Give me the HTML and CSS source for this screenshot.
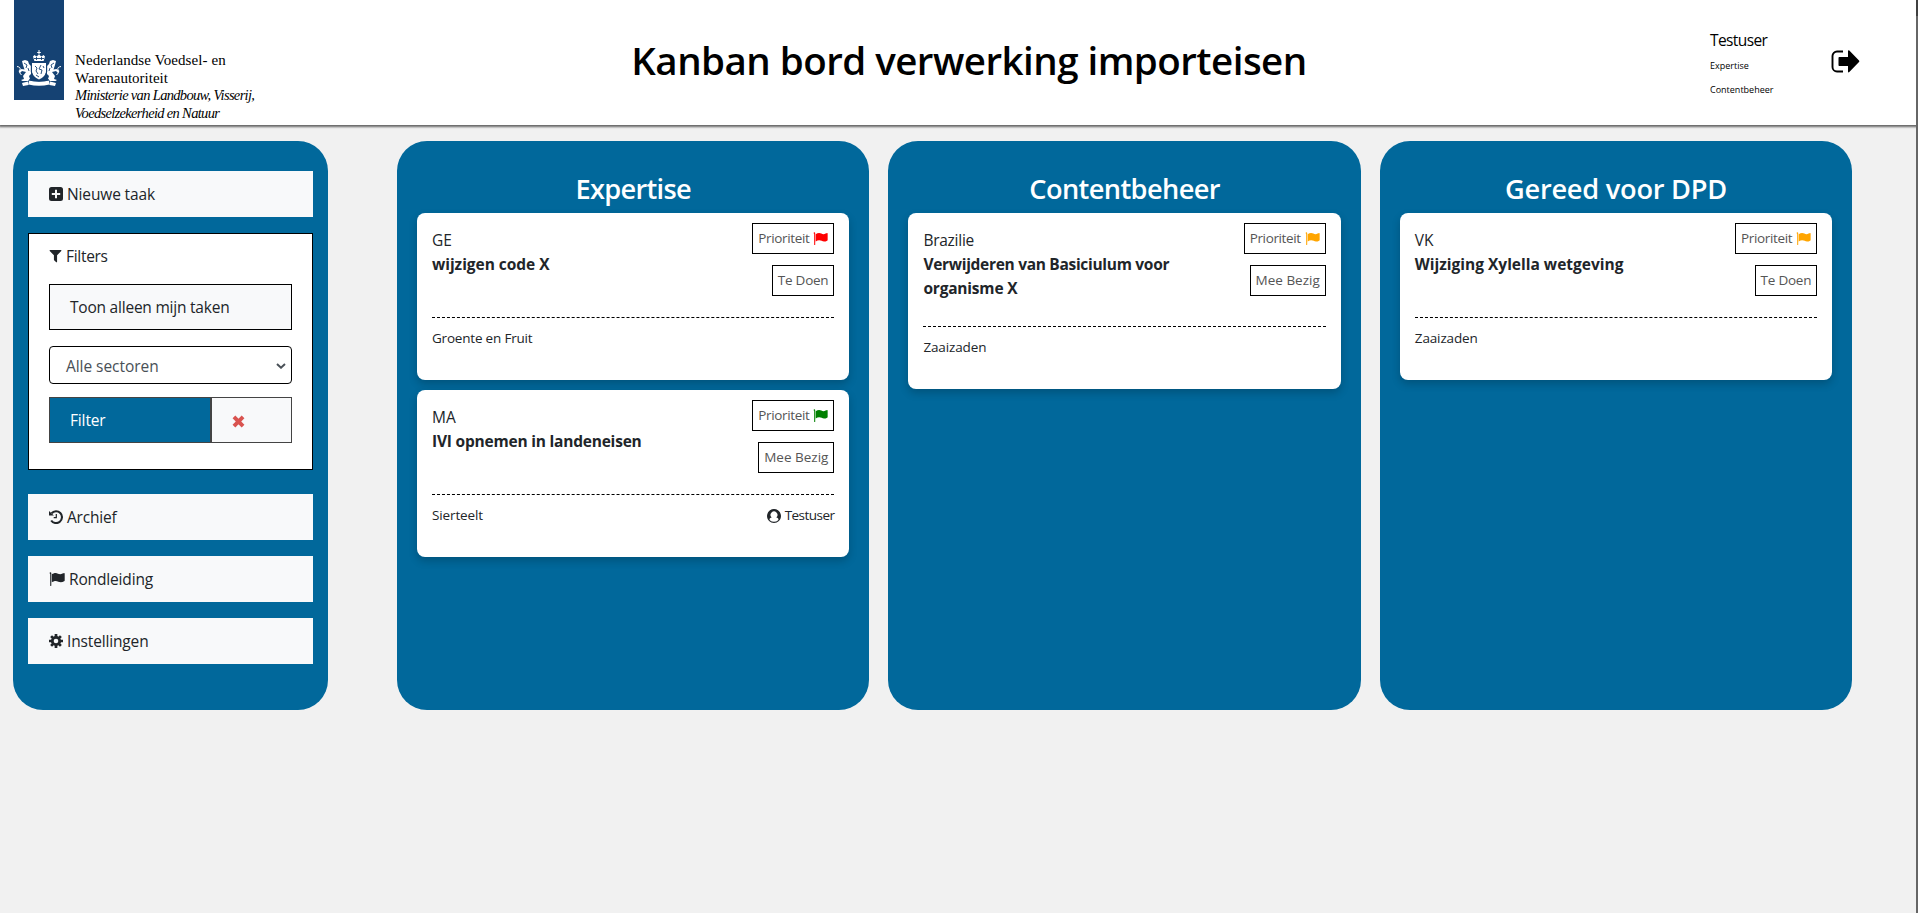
FILE: index.html
```html
<!DOCTYPE html>
<html lang="nl">
<head>
<meta charset="utf-8">
<title>Kanban bord verwerking importeisen</title>
<link rel="stylesheet" href="styles.css">
</head>
<body>
<svg class="sprite" aria-hidden="true">
  <symbol id="flag" viewBox="0 0 16 14"><path d="M1.4.2c.6 0 .9.4.9.8v12.6c0 .2-.1.3-.3.3H1.500c-.2 0-.3-.1-.3-.3V2C.8 1.800.600 1.500.600 1.100.600.600.900.200 1.400.2z"/><path d="M2.800 2.300C4 1.600 5.300 1 6.500 1c2 0 3 1.300 4.700 1.300 1.500 0 3.300-1.200 3.900-1.200.4 0 .6.200.6.600v6.900c0 .4-.3.500-.6.700-1 .500-2.200 1-3.300 1-1.900 0-3.100-1.300-5.200-1.300-1.200 0-2.500.6-3.800 1.300z"/></symbol>
</svg>
<header class="header">
  <div class="brand">
    <div class="ribbon">
      <svg class="crest" viewBox="0 0 44 37">
        <g>
          <path d="M21.500 0h1v2h1.300v1h-1.300v1.400h-1V3h-1.300V2h1.300z"/>
          <path d="M16 6.500l1.500-1.500 2 1.600L22 4.500l2.500 2.100 2-1.600L28 6.500l-1.400 4.500h-9.200z"/>
          <path d="M15 13h14v8c0 4-3 6.500-7 8.500-4-2-7-4.500-7-8.500z"/>
          <path d="M5 11l3-1 3 1 1 3 2 2v8l-2 2 1 3-2 2H5.500L4 30l3-1-1-3 3-4-4-1-2 2-1.500-2 3-2 3 .5L6 15z"/>
          <path d="M39 11l-3-1-3 1-1 3-2 2v8l2 2-1 3 2 2h5.500l1.500-1-3-1 1-3-3-4 4-1 2 2 1.500-2-3-2-3 .5L38 15z"/>
          <path d="M12 30.500q10 2.500 20 0l.5 4q-10.500 2.500-21 0zM5 33l6-1.500.5 3.500L6 36zM39 33l-6-1.500-.5 3.500 5.500 1z"/>
        </g>
        <g fill="none" stroke="#fff"><path d="M4.500 25q-3-2-1.500-5 1-3-3-3.500M39.500 25q3-2 1.500-5-1-3 3-3.500"/></g>
        <g fill="none" stroke="#154273" stroke-width=".9"><path d="M17 8.500h10M19.500 7v3M24.500 7v3M18 16l2 2-1 3 2 3M24 15l-2 4 3 1-1 4M26 16l1 2M19 25l3 2M7 13l3 2-1 3M37 13l-3 2 1 3M14.300 13v9q.7 4 4 6.500M29.700 13v9q-.7 4-4 6.500M11 18l1 3M33 18l-1 3M12 29.800q10 2.400 20 0"/></g>
      </svg>
    </div>
    <div class="brand-text"><span class="b1">Nederlandse Voedsel- en</span><span class="b2">Warenautoriteit</span><span class="b3">Ministerie van Landbouw, Visserij,</span><span class="b4">Voedselzekerheid en Natuur</span></div>
  </div>
  <h1 class="title">Kanban bord verwerking importeisen</h1>
  <div class="user">
    <span class="user-name">Testuser</span><span class="role">Expertise</span><span class="role">Contentbeheer</span>
  </div>
  <svg class="logout" viewBox="0 0 29 24"><path d="M12 1.500H6A4.500 4.500 0 0 0 1.500 6v11A4.500 4.500 0 0 0 6 21.500h6" fill="none" stroke="#000" stroke-width="1.900"/><path d="M8.500 7H17V1.200c0-.9.700-1.100 1.300-.6L28 10.600c.5.500.5 1 0 1.500l-9.700 10c-.6.600-1.300.300-1.300-.600V16H8.500c-.600 0-1-.400-1-1V8c0-.600.400-1 1-1z"/></svg>
</header>
<main class="main">
  <nav class="sidebar">
    <a class="item"><svg class="ico" viewBox="0 0 14 14"><path fill-rule="evenodd" d="M2.500 0h9A2.500 2.500 0 0 1 14 2.500v9a2.500 2.500 0 0 1-2.500 2.500h-9A2.500 2.500 0 0 1 0 11.500v-9A2.500 2.500 0 0 1 2.500 0zM6 2.800V6H2.800v2H6v3.200h2V8h3.200V6H8V2.800z"/></svg><span class="t-new">Nieuwe taak</span></a>
    <section class="filters">
      <div class="filters-head"><svg class="ico ico-filter" viewBox="0 0 13 14"><path d="M.7 0h11.600c.6 0 .8.600.4 1L8.200 5.700v7c0 .600-.5.800-.9.400L5 11c-.2-.200-.2-.300-.2-.500V5.700L.300 1C-.100.600.100 0 .7 0z"/></svg><span class="t-filters">Filters</span></div>
      <button class="btn toggle"><span class="t-toon">Toon alleen mijn taken</span></button>
      <div class="select"><span class="t-sel">Alle sectoren</span><svg class="chev" viewBox="0 0 10 6"><path d="M1 1l4 3.700L9 1" fill="none" stroke="#495057" stroke-width="2"/></svg></div>
      <div class="split">
        <button class="btn apply"><span class="t-fil">Filter</span></button>
        <button class="btn clear"><svg class="cross" viewBox="0 0 12 12"><path d="M1.800 1.800l8.400 8.400M10.200 1.800l-8.400 8.400" stroke="#d9534f" stroke-width="3.600"/></svg></button>
      </div>
    </section>
    <a class="item"><svg class="ico" viewBox="0 0 14 14"><path d="M2.600 3.300A5.900 5.900 0 1 1 2.200 10.500" fill="none" stroke="#212529" stroke-width="2.100"/><path d="M0 .9l4.900 4.600H0zM6.700 4h1.200v4.200H4.700V7.100h2z"/></svg><span class="t-arc">Archief</span></a>
    <a class="item"><svg class="ico ico-flag"><use href="#flag"/></svg><span class="t-ron">Rondleiding</span></a>
    <a class="item"><svg class="ico" viewBox="0 0 14 14"><path d="M7 0v14M0 7h14M2.100 2.100l9.800 9.800M11.900 2.100l-9.800 9.800" stroke="#212529" stroke-width="2.700"/><circle cx="7" cy="7" r="5.100"/><circle cx="7" cy="7" r="2.300" fill="#f8f9fa"/></svg><span class="t-ins">Instellingen</span></a>
  </nav>
  <div class="board">
    <section class="column">
      <h2 class="c-exp">Expertise</h2>
      <article class="card">
        <div class="card-top">
          <div class="info"><span>GE</span><strong class="n1">wijzigen code X</strong></div>
          <div class="badges"><span class="badge"><span class="t-prio">Prioriteit</span><svg class="flag red" viewBox="0 0 16 14"><use href="#flag"/></svg></span><span class="badge"><span class="t-doen">Te Doen</span></span></div>
        </div>
        <div class="card-foot"><span class="f1">Groente en Fruit</span></div>
      </article>
      <article class="card">
        <div class="card-top">
          <div class="info"><span>MA</span><strong class="n2">IVI opnemen in landeneisen</strong></div>
          <div class="badges"><span class="badge"><span class="t-prio">Prioriteit</span><svg class="flag green" viewBox="0 0 16 14"><use href="#flag"/></svg></span><span class="badge"><span class="t-mee">Mee Bezig</span></span></div>
        </div>
        <div class="card-foot"><span class="f2">Sierteelt</span><span class="owner"><svg class="avatar" viewBox="0 0 14 14"><circle cx="7" cy="7" r="6.400" fill="none" stroke="#212529" stroke-width="1.100"/><path fill-rule="evenodd" d="M7 .5a6.500 6.500 0 0 1 5 10.700C11.600 9.500 10.600 8.600 9.300 8.400a3.400 3.400 0 1 0-4.600 0C3.400 8.600 2.400 9.500 2 11.200A6.500 6.500 0 0 1 7 .5z"/></svg><span class="t-own">Testuser</span></span></div>
      </article>
    </section>
    <section class="column">
      <h2 class="c-con">Contentbeheer</h2>
      <article class="card">
        <div class="card-top">
          <div class="info"><span class="k3">Brazilie</span><strong class="n3">Verwijderen van Basiciulum voor</strong><strong class="n4">organisme X</strong></div>
          <div class="badges"><span class="badge"><span class="t-prio">Prioriteit</span><svg class="flag orange" viewBox="0 0 16 14"><use href="#flag"/></svg></span><span class="badge"><span class="t-mee">Mee Bezig</span></span></div>
        </div>
        <div class="card-foot"><span class="f2">Zaaizaden</span></div>
      </article>
    </section>
    <section class="column">
      <h2 class="c-ger">Gereed voor DPD</h2>
      <article class="card">
        <div class="card-top">
          <div class="info"><span>VK</span><strong>Wijziging Xylella wetgeving</strong></div>
          <div class="badges"><span class="badge"><span class="t-prio">Prioriteit</span><svg class="flag orange" viewBox="0 0 16 14"><use href="#flag"/></svg></span><span class="badge"><span class="t-doen">Te Doen</span></span></div>
        </div>
        <div class="card-foot"><span class="f2">Zaaizaden</span></div>
      </article>
    </section>
  </div>
</main>
<div class="scroll-edge"></div>
</body>
</html>
```

FILE: styles.css
```css
* { box-sizing: border-box; }
html, body { height: 100%; }
body { margin: 0; overflow: hidden; background: #f1f1f1; color: #212529; font: 15.5px/24px "Open Sans", "Noto Sans", sans-serif; }
span, strong, h1, h2 { white-space: nowrap; }
.sprite { display: none; }
svg { display: block; flex: none; fill: currentColor; }
.header { display: grid; grid-template-columns: 400px 1fr 121px 85px; height: 125px; padding-right: 2px; background: #fff; color: #000; box-shadow: 0 1px 2px 1px #666; }
.brand { display: flex; gap: 11px; padding-left: 14px; }
.ribbon { width: 50px; height: 100px; padding: 50px 3px 0; background: #154273; }
.crest { width: 44px; height: 37px; fill: #fff; }
.brand-text { display: flex; flex-direction: column; align-items: flex-start; padding-top: 52px; font: 15px/17.6px "Liberation Serif", serif; }
.b1 { letter-spacing: .1px; }
.b3, .b4 { font-style: italic; font-size: 14.5px; letter-spacing: -.67px; }
.title { margin: 0; justify-self: center; padding: 30px 172px 0 0; font-size: 38.5px; line-height: 60px; font-weight: 600; letter-spacing: -.53px; }
.user { display: flex; flex-direction: column; align-items: flex-start; padding-top: 28px; }
.user-name { letter-spacing: -.6px; }
.role { position: relative; top: 2px; font-size: 9px; line-height: 24px; }
.logout { width: 29px; height: 24px; margin-top: 50px; }
.main { display: flex; align-items: flex-start; gap: 69px; padding: 16px 0 0 13px; }
.sidebar { width: 315px; height: 569px; padding: 30px 15px; border-radius: 30px; background: #01689b; display: flex; flex-direction: column; gap: 16px; }
.item { display: flex; align-items: center; gap: 4px; height: 46px; padding-left: 21px; background: #f8f9fa; }
.ico { width: 14px; height: 14px; }
.ico-flag { width: 16px; }
.ico-filter { width: 13px; height: 13px; }
.filters { height: 237px; margin-bottom: 8px; padding: 10px 20px 0; border: 1px solid #000; background: #fff; }
.filters-head { display: flex; align-items: center; gap: 4px; height: 24px; margin-bottom: 16px; }
.btn { display: flex; align-items: center; height: 46px; padding: 0 20px; border: 1px solid #000; background: #f8f9fa; color: #212529; font: inherit; }
.toggle { width: 100%; margin-bottom: 16px; }
.select { display: flex; align-items: center; justify-content: space-between; height: 38px; margin-bottom: 13px; padding: 2px 5px 0 16px; border: 1px solid #000; border-radius: 4px; color: #495057; }
.chev { width: 10px; height: 6px; margin-bottom: 1px; }
.split { display: grid; grid-template-columns: 162px 81px; }
.apply { border-color: #444; background: #01689b; color: #fff; }
.clear { border-color: #444; }
.cross { width: 13px; height: 13px; margin-top: 2px; }
.t-new { letter-spacing: -.13px; }
.t-filters { letter-spacing: -.3px; }
.t-toon { letter-spacing: -.22px; }
.t-sel { letter-spacing: -.05px; }
.t-fil, .t-ron, .t-ins { letter-spacing: -.15px; }
.t-arc { letter-spacing: -.2px; }
.board { display: grid; grid-template-columns: repeat(3, 472.4px); gap: 19px; }
.column { height: 569px; padding: 31px 20px 30px; border-radius: 30px; background: #01689b; }
.column h2 { width: fit-content; margin: 0 auto 7px; color: #fff; font-size: 27.2px; line-height: 34px; font-weight: 600; }
.column .c-exp { letter-spacing: -.68px; }
.column .c-con { letter-spacing: -.6px; }
.column .c-ger { letter-spacing: -.25px; }
.card { padding: 10px 15px 29px; margin-bottom: 10px; border-radius: 8px; background: #fff; box-shadow: 0 4px 8px rgba(0,0,0,.2); }
.card-top { display: flex; justify-content: space-between; min-height: 95px; border-bottom: 1px dashed #000; }
.info { display: flex; flex-direction: column; align-items: flex-start; padding: 5px 0 26px; }
.info strong { font-weight: 700; }
.info .n1 { letter-spacing: -.04px; }
.info .n2 { letter-spacing: -.21px; }
.info .n3 { letter-spacing: -.3px; }
.info .n4 { letter-spacing: -.2px; }
.k3 { letter-spacing: -.25px; }
.badges { display: flex; flex-direction: column; align-items: flex-end; gap: 11px; }
.badge { display: flex; align-items: center; gap: 4px; height: 31px; padding: 0 5px 1px; border: 1px solid #000; color: #555; font-size: 13.5px; }
.t-prio { letter-spacing: -.36px; }
.t-doen { letter-spacing: -.25px; }
.flag { width: 15px; height: 13px; }
.red { color: red; }
.green { color: green; }
.orange { color: orange; }
.card-foot { display: flex; justify-content: space-between; padding-top: 10px; height: 33px; font-size: 13.5px; line-height: 21px; }
.f1 { letter-spacing: -.2px; }
.f2 { letter-spacing: -.13px; }
.owner { display: flex; align-items: center; gap: 4px; height: 21px; }
.avatar { width: 14px; height: 14px; }
.t-own { letter-spacing: -.55px; }
.scroll-edge { position: absolute; top: 0; right: 0; width: 2px; height: 913px; border-top: 16px solid #404040; background: #666; }
```
